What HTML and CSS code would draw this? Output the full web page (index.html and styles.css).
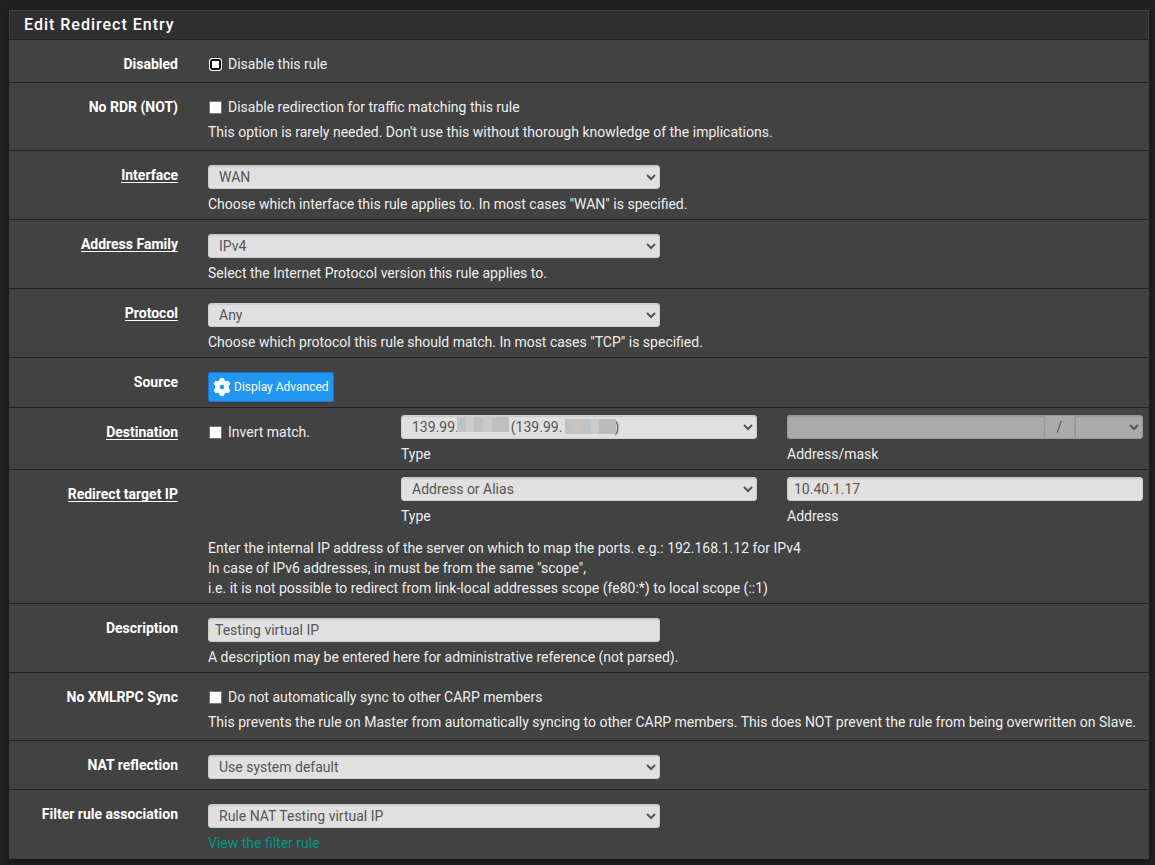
FILE: index.html
```html
<!DOCTYPE html>
<html lang="en">
<head>
<meta charset="utf-8">
<title>Edit Redirect Entry</title>
<link rel="stylesheet" href="styles.css">
</head>
<body>
<form class="panel">
  <h2 class="panel-title">Edit Redirect Entry</h2>

  <div class="row row-check">
    <span class="label">Disabled</span>
    <div class="wide">
      <label class="check"><input type="checkbox" class="box box-focus">Disable this rule</label>
    </div>
  </div>

  <div class="row row-check">
    <span class="label">No RDR (NOT)</span>
    <div class="wide">
      <label class="check"><input type="checkbox" class="box">Disable redirection for traffic matching this rule</label>
      <p class="help">This option is rarely needed. Don't use this without thorough knowledge of the implications.</p>
    </div>
  </div>

  <div class="row">
    <label class="label required" for="interface"><span>Interface</span></label>
    <div class="wide">
      <select class="control half" id="interface"><option>WAN</option></select>
      <p class="help">Choose which interface this rule applies to. In most cases "WAN" is specified.</p>
    </div>
  </div>

  <div class="row">
    <label class="label required" for="family"><span>Address Family</span></label>
    <div class="wide">
      <select class="control half" id="family"><option>IPv4</option></select>
      <p class="help">Select the Internet Protocol version this rule applies to.</p>
    </div>
  </div>

  <div class="row">
    <label class="label required" for="protocol"><span>Protocol</span></label>
    <div class="wide">
      <select class="control half" id="protocol"><option>Any</option></select>
      <p class="help">Choose which protocol this rule should match. In most cases "TCP" is specified.</p>
    </div>
  </div>

  <div class="row">
    <span class="label">Source</span>
    <div class="wide">
      <button type="button" class="button">
        <svg class="gear" viewBox="0 0 18 18" aria-hidden="true"><path fill-rule="evenodd" d="M7.3.5h3.4l.6 2.3 1.700 1 2.300-.7 1.700 2.900-1.700 1.700v2.600l1.700 1.700-1.700 2.900-2.300-.7-1.700 1-.6 2.300H7.300l-.6-2.300-1.700-1-2.300.7L1 12l1.700-1.700V7.700L1 6l1.700-2.900 2.300.7 1.700-1zM9 6.200a2.800 2.800 0 1 0 0 5.600 2.800 2.800 0 0 0 0-5.600z" stroke="#fff" stroke-width=".9" stroke-linejoin="round"/></svg>
        Display Advanced
      </button>
    </div>
  </div>

  <div class="row row-split">
    <span class="label required"><span>Destination</span></span>
    <div class="invert">
      <label class="check"><input type="checkbox" class="box">Invert match.</label>
    </div>
    <div class="field">
      <div class="masked">
        <select class="control" id="dst-type"><option>139.99.&nbsp;&nbsp;&nbsp;&nbsp;&nbsp;&nbsp;&nbsp;&nbsp;&nbsp;&nbsp;&nbsp;&nbsp;&nbsp;&nbsp;&nbsp;(139.99.&nbsp;&nbsp;&nbsp;&nbsp;&nbsp;&nbsp;&nbsp;&nbsp;&nbsp;&nbsp;&nbsp;&nbsp;&nbsp;&nbsp;&nbsp;)</option></select>
        <span class="mask mask-a"></span>
        <span class="mask mask-b"></span>
      </div>
      <label class="help" for="dst-type">Type</label>
    </div>
    <div class="field">
      <div class="group">
        <input class="control" type="text" id="dst-addr" disabled>
        <span class="addon">/</span>
        <select class="control mask-bits" aria-label="Mask" disabled><option></option></select>
      </div>
      <label class="help" for="dst-addr">Address/mask</label>
    </div>
  </div>

  <div class="row row-split">
    <span class="label required"><span>Redirect target IP</span></span>
    <div class="invert"></div>
    <div class="field">
      <select class="control" id="target-type"><option>Address or Alias</option></select>
      <label class="help" for="target-type">Type</label>
    </div>
    <div class="field">
      <input class="control" type="text" id="target-addr" value="10.40.1.17">
      <label class="help" for="target-addr">Address</label>
    </div>
    <p class="help note">Enter the internal IP address of the server on which to map the ports. e.g.: 192.168.1.12 for IPv4<br>In case of IPv6 addresses, in must be from the same "scope",<br>i.e. it is not possible to redirect from link-local addresses scope (fe80:*) to local scope (::1)</p>
  </div>

  <div class="row">
    <label class="label" for="descr">Description</label>
    <div class="wide">
      <input class="control half" type="text" id="descr" value="Testing virtual IP">
      <p class="help">A description may be entered here for administrative reference (not parsed).</p>
    </div>
  </div>

  <div class="row row-check">
    <span class="label">No XMLRPC Sync</span>
    <div class="wide">
      <label class="check"><input type="checkbox" class="box">Do not automatically sync to other CARP members</label>
      <p class="help">This prevents the rule on Master from automatically syncing to other CARP members. This does NOT prevent the rule from being overwritten on Slave.</p>
    </div>
  </div>

  <div class="row row-loose">
    <label class="label" for="reflection">NAT reflection</label>
    <div class="wide">
      <select class="control half" id="reflection"><option>Use system default</option></select>
    </div>
  </div>

  <div class="row">
    <label class="label" for="association">Filter rule association</label>
    <div class="wide">
      <select class="control half" id="association"><option>Rule NAT Testing virtual IP</option></select>
      <p class="help"><a class="link" href="#">View the filter rule</a></p>
    </div>
  </div>
</form>
</body>
</html>
```

FILE: styles.css
```css
* {
  box-sizing: border-box;
}

body {
  margin: 0;
  padding: 10px 6px 6px 9px;
  background: #212121;
  color: #eee;
  font: 14px/20px Roboto, sans-serif;
}

.panel {
  background: #424242;
  box-shadow: 0 4px 8px rgba(0, 0, 0, 0.4);
}

.panel-title {
  margin: 0;
  padding: 3px 14px 4px;
  border: 1px solid #424242;
  border-bottom-color: #212121;
  background: #303030;
  color: #fff;
  font-size: 16px;
  font-weight: 500;
  line-height: 21px;
  letter-spacing: 1px;
}

/* Twelve columns with 30px gutters */
.row {
  display: grid;
  grid-template-columns: repeat(12, minmax(0, 1fr));
  column-gap: 30px;
  padding: 14px 6px 5px;
  border-bottom: 1px solid #212121;
}

.row:last-child {
  border-bottom: 0;
  padding-bottom: 6px;
}

.row-check {
  padding-bottom: 8px;
}

.row-loose {
  padding-bottom: 10px;
}

.row-split {
  padding-top: 7px;
}

.row-split > .label,
.row-split > .invert {
  padding-top: 7px;
}

.label {
  grid-column: span 2;
  color: #fff;
  font-weight: 700;
  text-align: right;
}

.required span {
  display: inline-block;
  height: 18px;
  border-bottom: 1px solid #fff;
}

.wide {
  grid-column: span 10;
}

.invert {
  grid-column: span 2;
}

.field {
  grid-column: span 4;
}

.note {
  grid-column: 3 / -1;
  padding-top: 7px;
}

.check {
  display: flex;
  align-items: center;
  gap: 6px;
  padding-left: 1px;
}

.box {
  appearance: none;
  width: 13px;
  height: 13px;
  margin: 1px 0 0;
  border: 1px solid #767676;
  border-radius: 1px;
  background: #fff;
}

.box:checked {
  box-shadow: inset 0 0 0 3px #fff;
  background: #009688;
}

.box-focus {
  border-color: #fff;
  border-radius: 3px;
  box-shadow: inset 0 0 0 2px #101010;
}

.help {
  display: block;
  margin: 5px 0 0;
}

.control {
  display: block;
  width: 100%;
  height: 24px;
  margin: 0;
  padding: 0 6px;
  border: 1px solid #ccc;
  border-radius: 3px;
  background-color: #e0e0e0;
  box-shadow: inset 0 1px 1px rgba(0, 0, 0, 0.1);
  color: #555;
  font: 14px/20px Roboto, sans-serif;
}

.control:disabled {
  border-color: #999;
  background-color: #aaa;
  opacity: 1;
}

.half {
  width: calc(50% - 16px);
}

.group {
  display: flex;
}

.group .control:first-child {
  flex: 1;
  min-width: 0;
  border-right: 0;
  border-radius: 3px 0 0 3px;
}

.addon {
  width: 31px;
  height: 24px;
  border: 1px solid #999;
  background: #aaa;
  color: #555;
  line-height: 22px;
  text-align: center;
}

.group .mask-bits {
  width: 68px;
  border-radius: 0 3px 3px 0;
}

.masked {
  position: relative;
}

/* Pixelated cover over the private part of each address */
.mask {
  position: absolute;
  height: 15px;
}

.mask-a {
  top: 2px;
  left: 56px;
  width: 52px;
  background: linear-gradient(90deg, #c2c2c2 9px, #cbcccb 9px 17px, #c0c0c0 17px 26px, #cacaca 26px 35px, #bfbfbf 35px);
}

.mask-b {
  top: 4px;
  left: 164px;
  width: 51px;
  background: linear-gradient(90deg, #c2c2c2 9px, #c8c3bf 9px 17px, #bfc3c7 17px 26px, #cacbca 26px 34px, #bcbbba 34px);
}

.button {
  display: flex;
  align-items: center;
  gap: 3px;
  height: 30px;
  margin: 0;
  padding: 0 4px;
  border: 1px solid #1976d2;
  border-radius: 2px;
  background: #2196f3;
  color: #fff;
  font: 12px/18px Roboto, sans-serif;
}

.gear {
  width: 18px;
  height: 18px;
  fill: #fff;
}

.link {
  color: #009688;
  text-decoration: none;
}
```
